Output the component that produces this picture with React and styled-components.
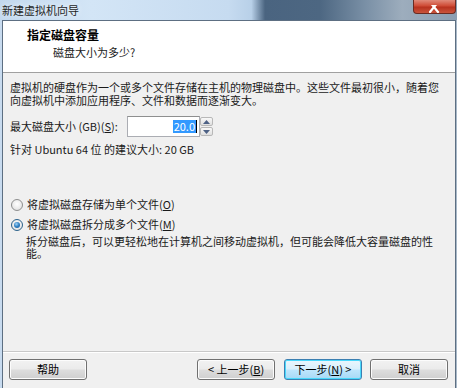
import React from "react";
import styled, { createGlobalStyle } from "styled-components";

const Global = createGlobalStyle`
  html, body { margin: 0; padding: 0; }
  body { background: #fff; }
  * { box-sizing: border-box; }
`;

const FONT = `"Noto Sans CJK SC", "Noto Sans", sans-serif`;

const TITLE_GRADIENT =
  "linear-gradient(90deg, #c2d8ee 0%, #d3e5f6 20%, #c6dbf0 50%, #b8d0e8 55%, #4a6480 58%, #4d6782 70%, #7a90a6 80%, #9dadbd 88%, #8b9eb2 100%)";

const Window = styled.div`
  width: 457px;
  height: 388px;
  display: flex;
  flex-direction: column;
  overflow: hidden;
  font-family: ${FONT};
  font-size: 11px;
  color: #1a1a1a;
  background-color: #b9cde2;
`;

const TitleBar = styled.div`
  height: 20px;
  flex: 0 0 20px;
  display: flex;
  justify-content: space-between;
  align-items: flex-start;
  padding-left: 2px;
  background-image: ${TITLE_GRADIENT};
`;

const TitleText = styled.div`
  padding-top: 3px;
  line-height: 14px;
  color: #1e1e1e;
  text-shadow: 0 0 6px rgba(255, 255, 255, 0.9);
`;

const CloseButton = styled.div`
  width: 43px;
  height: 14px;
  margin-right: 1px;
  border: 1px solid #6a2b22;
  border-top: none;
  border-radius: 0 0 4px 4px;
  background: linear-gradient(to bottom, #e08a7a 0%, #cf4b36 45%, #b8321f 55%, #c9543c 100%);
  display: flex;
  align-items: flex-end;
  justify-content: center;
  overflow: hidden;
`;

const Frame = styled.div`
  flex: 1;
  display: flex;
  padding: 0 1px 0 2px;
  background-image: linear-gradient(90deg, #c8dbef 0%, #c8dbef 55%, #8fa3b8 60%, #a9b9c9 100%);
`;

const Client = styled.div`
  flex: 1;
  display: flex;
  flex-direction: column;
  background: #f0f0f0;
  border: 1px solid #5d6f82;
  border-bottom: none;
`;

const Header = styled.div`
  height: 52px;
  background: #fff;
  border-bottom: 1px solid #a0a0a0;
  padding: 7px 0 0 24px;
  display: flex;
  flex-direction: column;
  gap: 3px;
`;

const HeaderTitle = styled.div`
  font-size: 12px;
  font-weight: bold;
  line-height: 14px;
  color: #000;
`;

const HeaderSub = styled.div`
  padding-left: 26px;
  line-height: 14px;
  font-size: 11px;
`;

const Body = styled.div`
  flex: 1;
  padding: 8px 0 0 7px;
  display: flex;
  flex-direction: column;
`;

const Line = styled.div`
  line-height: 13px;
  height: ${(p) => p.$h || 13}px;
  white-space: nowrap;
  padding-left: ${(p) => p.$indent || 0}px;
`;

const SizeRow = styled.div`
  margin-top: 9px;
  display: flex;
  align-items: center;
  height: 21px;
`;

const Label = styled.div`
  width: 117px;
  line-height: 13px;
`;

const Mn = styled.span`
  text-decoration: underline;
  text-underline-offset: 1px;
`;

const NumInput = styled.div`
  width: 73px;
  height: 21px;
  background: #fff;
  border: 1px solid #abadb3;
  border-top-color: #8e8f8f;
  display: flex;
  align-items: center;
  justify-content: flex-end;
  padding-right: 2px;
`;

const Selected = styled.span`
  background: #3399ff;
  color: #fff;
  line-height: 13px;
  padding: 0 1px;
  border-right: 1px solid #000;
`;

const Spinner = styled.div`
  width: 13px;
  height: 21px;
  display: flex;
  flex-direction: column;
  gap: 1px;
  padding: 1px 0;
`;

const SpinBtn = styled.div`
  flex: 1;
  border: 1px solid #b8b8b8;
  border-radius: 2px;
  background: linear-gradient(to bottom, #f8f8f8, #e0e0e0);
  display: flex;
  align-items: center;
  justify-content: center;
`;

const Recommend = styled.div`
  margin-top: 6px;
  line-height: 13px;
`;

const RadioRow = styled.div`
  display: flex;
  align-items: center;
  gap: 4px;
  margin-top: ${(p) => p.$mt}px;
  padding-left: 1px;
  line-height: 13px;
`;

const Radio = styled.span`
  width: 12px;
  height: 12px;
  border-radius: 50%;
  border: 1px solid ${(p) => (p.$checked ? "#2c628b" : "#8e8f8f")};
  background: radial-gradient(circle at 50% 40%, #ffffff 0%, #e6e6e6 70%, #d4d4d4 100%);
  display: flex;
  align-items: center;
  justify-content: center;
  &::after {
    content: "";
    width: 6px;
    height: 6px;
    border-radius: 50%;
    display: ${(p) => (p.$checked ? "block" : "none")};
    background: radial-gradient(circle at 40% 35%, #9fd3f7 0%, #2f7fc1 50%, #1c5a99 100%);
  }
`;

const Desc = styled.div`
  margin-top: 4px;
  display: flex;
  flex-direction: column;
`;

const Footer = styled.div`
  height: 37px;
  border-top: 1px solid #c8c8c8;
  box-shadow: inset 0 1px 0 #fff;
  display: flex;
  align-items: flex-start;
  padding: 7px 7px 0 6px;
`;

const Button = styled.div`
  width: 78px;
  height: 21px;
  border: 1px solid ${(p) => (p.$default ? "#3c7fb1" : "#707070")};
  border-radius: 3px;
  background: ${(p) =>
    p.$default
      ? "linear-gradient(to bottom, #eaf6fd 0%, #d9f0fc 48%, #bee6fd 52%, #a7d9f5 100%)"
      : "linear-gradient(to bottom, #f2f2f2 0%, #ebebeb 48%, #dddddd 52%, #cfcfcf 100%)"};
  box-shadow: inset 0 0 0 1px ${(p) => (p.$default ? "#48d8fb" : "#fcfcfc")};
  display: flex;
  align-items: center;
  justify-content: center;
  line-height: 13px;
  margin-left: ${(p) => p.$ml || 0}px;
  color: #000;
`;

const Spacer = styled.div`
  flex: 1;
`;

const Arrow = ({ up }) => (
  <svg width="7" height="4" viewBox="0 0 7 4">
    <path d={up ? "M0 4 L3.5 0 L7 4 Z" : "M0 0 L3.5 4 L7 0 Z"} fill="#4d6185" />
  </svg>
);

export default function App() {
  return (
    <>
      <Global />
      <Window>
        <TitleBar>
          <TitleText>新建虚拟机向导</TitleText>
          <CloseButton>
            <svg width="11" height="8" viewBox="0 0 11 8">
              <path d="M1 -3 L9 7 M9 -3 L1 7" stroke="#fff" strokeWidth="2.2" strokeLinecap="round" />
            </svg>
          </CloseButton>
        </TitleBar>
        <Frame>
          <Client>
            <Header>
              <HeaderTitle>指定磁盘容量</HeaderTitle>
              <HeaderSub>磁盘大小为多少?</HeaderSub>
            </Header>
            <Body>
              <Line>虚拟机的硬盘作为一个或多个文件存储在主机的物理磁盘中。这些文件最初很小，随着您</Line>
              <Line>向虚拟机中添加应用程序、文件和数据而逐渐变大。</Line>
              <SizeRow>
                <Label>
                  最大磁盘大小 (GB)(<Mn>S</Mn>):
                </Label>
                <NumInput>
                  <Selected>20.0</Selected>
                </NumInput>
                <Spinner>
                  <SpinBtn>
                    <Arrow up />
                  </SpinBtn>
                  <SpinBtn>
                    <Arrow />
                  </SpinBtn>
                </Spinner>
              </SizeRow>
              <Recommend>针对 Ubuntu 64 位 的建议大小: 20 GB</Recommend>
              <RadioRow $mt={42}>
                <Radio />
                <span>
                  将虚拟磁盘存储为单个文件(<Mn>O</Mn>)
                </span>
              </RadioRow>
              <RadioRow $mt={7}>
                <Radio $checked />
                <span>
                  将虚拟磁盘拆分成多个文件(<Mn>M</Mn>)
                </span>
              </RadioRow>
              <Desc>
                <Line $indent={16} $h={12}>
                  拆分磁盘后，可以更轻松地在计算机之间移动虚拟机，但可能会降低大容量磁盘的性
                </Line>
                <Line $indent={16} $h={12}>
                  能。
                </Line>
              </Desc>
            </Body>
            <Footer>
              <Button>帮助</Button>
              <Spacer />
              <Button>
                &lt; 上一步(<Mn>B</Mn>)
              </Button>
              <Button $default $ml={9}>
                下一步(<Mn>N</Mn>) &gt;
              </Button>
              <Button $ml={8}>取消</Button>
            </Footer>
          </Client>
        </Frame>
      </Window>
    </>
  );
}
